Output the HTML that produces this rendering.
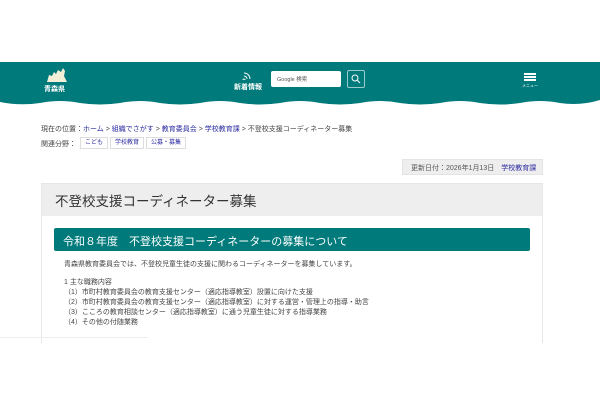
<!DOCTYPE html>
<html><head><meta charset="utf-8"><style>
*{margin:0;padding:0;box-sizing:border-box}
body{width:600px;height:400px;background:#fff;font-family:"Liberation Sans","Noto Sans CJK JP",sans-serif;position:relative;overflow:hidden;color:#333}
.hdr{position:absolute;left:0;top:62px;width:600px;height:38px;background:#007a7a}
.wave{position:absolute;left:0;top:99px}
.a{position:absolute;white-space:nowrap}
a,.lk{color:#2a2aa0;text-decoration:none}
.tag{position:absolute;top:137px;height:12px;border:1px solid #ddd;font-size:6px;color:#2a2aa0;padding:1px 4px;line-height:9px}
</style></head><body>
<div class="hdr"></div>
<svg class="wave" width="600" height="8" viewBox="0 0 600 8"><path d="M0 0 H600 V1 Q580 7 560 4 Q540 0 520 4 Q500 7 480 4 Q460 0 440 4 Q420 7 400 4 Q380 0 360 4 Q340 7 320 4 Q300 0 280 4 Q260 7 240 4 Q220 0 200 4 Q180 7 160 4 Q140 0 120 4 Q100 7 80 4 Q60 0 40 4 Q20 7 0 3 Z" fill="#007a7a"/></svg>
<svg class="a" style="left:46px;top:68px" width="22" height="14" viewBox="0 0 22 14"><path d="M1 14 L3 7 L6 8 L8 4 L10 6 L12 2 L15 4 L17 0 L19 3 L18 8 L21 14Z" fill="#f4f0d8"/></svg>
<div class="a" style="left:44px;top:84px;font-size:7px;color:#fff;font-weight:bold">青森県</div>
<svg class="a" style="left:241px;top:70px" width="12" height="10" viewBox="0 0 12 10"><path d="M3 9a1 1 0 1 0 .1 0M3 6a3 3 0 0 1 3 3M3 3a6 6 0 0 1 6 6" stroke="#fff" fill="none" stroke-width="1"/></svg>
<div class="a" style="left:234px;top:82px;font-size:7px;color:#fff;font-weight:bold">新着情報</div>
<div class="a" style="left:271px;top:71px;width:70px;height:16px;background:#fff;border-radius:2px;font-size:5.5px;padding:4px 6px;color:#555">Google 検索</div>
<div class="a" style="left:347px;top:70px;width:18px;height:18px;border:1px solid #9cc;border-radius:2px"></div>
<svg class="a" style="left:350px;top:73px" width="12" height="12" viewBox="0 0 12 12"><circle cx="5" cy="5" r="3" stroke="#fff" fill="none"/><path d="M7 7L10 10" stroke="#fff"/></svg>
<div class="a" style="left:524px;top:73px;width:12px;height:1.5px;background:#fff;box-shadow:0 3px 0 #fff,0 6px 0 #fff"></div>
<div class="a" style="left:522px;top:83px;font-size:4px;color:#fff">メニュー</div>
<div class="a" style="left:41px;top:124px;font-size:7px;color:#444">現在の位置：<span class="lk">ホーム</span> &gt; <span class="lk">組織でさがす</span> &gt; <span class="lk">教育委員会</span> &gt; <span class="lk">学校教育課</span> &gt; 不登校支援コーディネーター募集</div>
<div class="a" style="left:41px;top:139px;font-size:7px;color:#444">関連分野：</div>
<div class="tag" style="left:80px">こども</div>
<div class="tag" style="left:110px">学校教育</div>
<div class="tag" style="left:146px">公募・募集</div>
<div class="a" style="left:402px;top:159px;width:141px;height:16px;background:#eee;border:1px solid #e4e4e4;font-size:7px;padding:3px 8px;color:#555">更新日付：2026年1月13日　<span class="lk">学校教育課</span></div>
<div class="a" style="left:41px;top:183px;width:502px;height:160px;border:1px solid #e6e6e6;border-bottom:none"></div>
<div class="a" style="left:42px;top:184px;width:500px;height:32px;background:#eee"></div>
<div class="a" style="left:55px;top:190px;font-size:13.5px;color:#333">不登校支援コーディネーター募集</div>
<div class="a" style="left:54px;top:228px;width:476px;height:23px;background:#007a7a;border-radius:2px"></div>
<div class="a" style="left:63px;top:233px;font-size:11px;color:#fff">令和８年度　不登校支援コーディネーターの募集について</div>
<div class="a" style="left:64px;top:260px;font-size:7px;color:#444;line-height:10px">青森県教育委員会では、不登校児童生徒の支援に関わるコーディネーターを募集しています。</div>
<div class="a" style="left:64px;top:278px;font-size:7px;color:#444;line-height:10px">1 主な職務内容<br>（1）市町村教育委員会の教育支援センター（適応指導教室）設置に向けた支援<br>（2）市町村教育委員会の教育支援センター（適応指導教室）に対する運営・管理上の指導・助言<br>（3）こころの教育相談センター（適応指導教室）に通う児童生徒に対する指導業務<br>（4）その他の付随業務</div>
<div class="a" style="left:0;top:337px;width:148px;height:1px;background:#eee"></div>
</body></html>
